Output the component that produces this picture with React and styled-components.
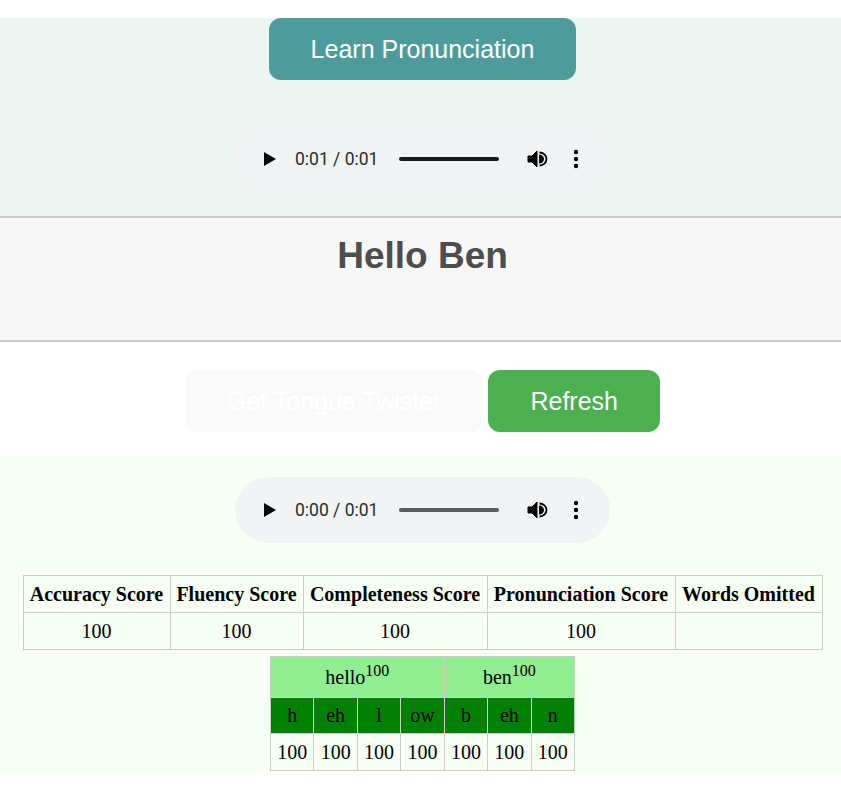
import React from "react";
import styled, { createGlobalStyle } from "styled-components";

const Global = createGlobalStyle`
  html, body { margin: 0; padding: 0; background: #fff; }
  body { font-family: "Liberation Sans", Arial, sans-serif; }
`;

const Page = styled.div`
  padding-top: 18px;
`;

const TopSection = styled.section`
  background: #edf5f3;
  border-bottom: 2px solid #cccccc;
  display: flex;
  flex-direction: column;
  align-items: center;
  padding: 0 0 24px 4px;
`;

const Button = styled.button`
  font-family: "Liberation Sans", Arial, sans-serif;
  font-size: 25px;
  height: 62px;
  padding: 0 42px;
  border: none;
  border-radius: 12px;
  color: #fff;
  background: ${(p) => p.$bg};
  cursor: pointer;
`;

const PlayerWrap = styled.div`
  margin-top: ${(p) => p.$top}px;
  width: 375px;
  height: 66px;
  border-radius: 33px;
  background: #f1f3f4;
  display: flex;
  align-items: center;
  box-sizing: border-box;
  padding-left: 28px;
`;

const Time = styled.span`
  font-family: Roboto, "Liberation Sans", sans-serif;
  font-size: 17.5px;
  color: #2b2b2b;
  margin-left: 19px;
  white-space: nowrap;
`;

const Track = styled.div`
  margin-left: 21px;
  width: 100px;
  height: 4px;
  border-radius: 2px;
  background: ${(p) => p.$color};
`;

const IconBox = styled.span`
  display: inline-flex;
  margin-left: ${(p) => p.$ml}px;
`;

const HelloSection = styled.section`
  background: #f7f7f7;
  border-bottom: 2px solid #cccccc;
  height: 122px;
  box-sizing: content-box;
  text-align: center;
  padding-left: 4px;
`;

const Title = styled.h1`
  margin: 0;
  padding-top: 17px;
  font-size: 37px;
  font-weight: bold;
  color: #4d4d4d;
`;

const ButtonRow = styled.section`
  display: flex;
  justify-content: center;
  gap: 5px;
  padding: 28px 0 23px 4px;
`;

const ResultSection = styled.section`
  background: #f8fff4;
  display: flex;
  flex-direction: column;
  align-items: center;
  padding: 22px 0 0 4px;
`;

const ScoreTable = styled.table`
  margin-top: 32px;
  width: 799px;
  border-collapse: collapse;
  font-family: "Liberation Serif", "Times New Roman", serif;
  font-size: 20px;
  color: #000;
  table-layout: fixed;
`;

const Th = styled.th`
  border: 1px solid #cccccc;
  height: 36px;
  padding: 0 4px;
  font-weight: bold;
  white-space: nowrap;
`;

const Td = styled.td`
  border: 1px solid #cccccc;
  height: 36px;
  padding: 0;
  text-align: center;
`;

const PhonemeTable = styled.table`
  margin-top: 6px;
  border-collapse: collapse;
  font-family: "Liberation Serif", "Times New Roman", serif;
  font-size: 20px;
  color: #000;
  table-layout: fixed;
  width: 305px;
`;

const PCell = styled.td`
  border: 1px solid #cccccc;
  text-align: center;
  padding: 0;
  height: ${(p) => p.$h}px;
  background: ${(p) => p.$bg || "transparent"};
`;

const Sup = styled.sup`
  font-size: 16px;
  vertical-align: 8px;
  line-height: 0;
`;

function PlayIcon() {
  return (
    <svg width="13" height="14" viewBox="0 0 13 14">
      <path d="M1 0 L13 7 L1 14 Z" fill="#000" />
    </svg>
  );
}

function VolumeIcon() {
  return (
    <svg width="22" height="22" viewBox="0 0 22 22">
      <path d="M2 8 h4 l5 -5 v16 l-5 -5 h-4 z" fill="#000" strokeLinejoin="round" stroke="#000" strokeWidth="1" />
      <path d="M13 6.5 a5 4.5 0 0 1 0 9 z" fill="#000" />
      <path d="M13.5 4.5 a7 6.5 0 0 1 0 13" fill="none" stroke="#000" strokeWidth="1.8" />
    </svg>
  );
}

function DotsIcon() {
  return (
    <svg width="6" height="20" viewBox="0 0 6 20">
      <circle cx="3" cy="3" r="2.2" fill="#000" />
      <circle cx="3" cy="10" r="2.2" fill="#000" />
      <circle cx="3" cy="17" r="2.2" fill="#000" />
    </svg>
  );
}

function Player({ time, trackColor, top }) {
  return (
    <PlayerWrap $top={top}>
      <IconBox $ml={0}>
        <PlayIcon />
      </IconBox>
      <Time>{time}</Time>
      <Track $color={trackColor} />
      <IconBox $ml={27}>
        <VolumeIcon />
      </IconBox>
      <IconBox $ml={25}>
        <DotsIcon />
      </IconBox>
    </PlayerWrap>
  );
}

const scoreHeaders = [
  ["Accuracy Score", 147],
  ["Fluency Score", 133],
  ["Completeness Score", 184],
  ["Pronunciation Score", 188],
  ["Words Omitted", 147],
];

const phonemes = ["h", "eh", "l", "ow", "b", "eh", "n"];

export default function App() {
  return (
    <Page>
      <Global />
      <TopSection>
        <Button $bg="#4e9b9b">Learn Pronunciation</Button>
        <Player time="0:01 / 0:01" trackColor="#1a1a1a" top={46} />
      </TopSection>
      <HelloSection>
        <Title>Hello Ben</Title>
      </HelloSection>
      <ButtonRow>
        <Button $bg="#f9f9f9">Get Tongue Twister</Button>
        <Button $bg="#4caf50">Refresh</Button>
      </ButtonRow>
      <ResultSection>
        <Player time="0:00 / 0:01" trackColor="#5a5a5a" top={0} />
        <ScoreTable>
          <colgroup>
            {scoreHeaders.map(([h, w]) => (
              <col key={h} style={{ width: w }} />
            ))}
          </colgroup>
          <thead>
            <tr>
              {scoreHeaders.map(([h]) => (
                <Th key={h}>{h}</Th>
              ))}
            </tr>
          </thead>
          <tbody>
            <tr>
              <Td>100</Td>
              <Td>100</Td>
              <Td>100</Td>
              <Td>100</Td>
              <Td></Td>
            </tr>
          </tbody>
        </ScoreTable>
        <PhonemeTable>
          <tbody>
            <tr>
              <PCell colSpan={4} $h={40} $bg="#90ee90">
                hello<Sup>100</Sup>
              </PCell>
              <PCell colSpan={3} $h={40} $bg="#90ee90">
                ben<Sup>100</Sup>
              </PCell>
            </tr>
            <tr>
              {phonemes.map((p, i) => (
                <PCell key={i} $h={35} $bg="#008000">
                  {p}
                </PCell>
              ))}
            </tr>
            <tr>
              {phonemes.map((p, i) => (
                <PCell key={i} $h={36}>
                  100
                </PCell>
              ))}
            </tr>
          </tbody>
        </PhonemeTable>
      </ResultSection>
    </Page>
  );
}
